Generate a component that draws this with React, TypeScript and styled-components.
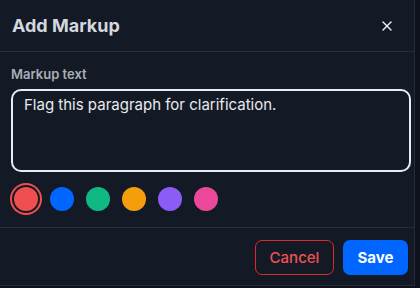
import React, { useState } from 'react'
import styled, { createGlobalStyle } from 'styled-components'

// G L O B A L
const GlobalStyle = createGlobalStyle`
  html, body {
    margin: 0;
    padding: 0;
    background: #0e131b;
  }
  body {
    font-family: Inter, "Liberation Sans", Arial, sans-serif;
    -webkit-font-smoothing: antialiased;
  }
  * { box-sizing: border-box; }
`

const SWATCHES = ['#f04f4f', '#0066ff', '#10b981', '#f59e0b', '#8b5cf6', '#ec4899']

// C O M P O N E N T
export default function App() {
  const [color, setColor] = useState(SWATCHES[0])
  const [text, setText] = useState('Flag this paragraph for clarification.')

  return (
    <>
      <GlobalStyle />
      <Dialog>
        <Header>
          <Title>Add Markup</Title>
          <CloseButton aria-label='Close'>
            <svg width='16' height='16' viewBox='0 0 24 24' fill='none' stroke='currentColor' strokeWidth='2.2' strokeLinecap='round'>
              <path d='M18 6 6 18' />
              <path d='m6 6 12 12' />
            </svg>
          </CloseButton>
        </Header>
        <Body>
          <Label htmlFor='markup'>Markup text</Label>
          <TextArea id='markup' value={text} onChange={(e) => setText(e.target.value)} />
          <Swatches>
            {SWATCHES.map((c) => (
              <Swatch
                key={c}
                $color={c}
                $active={c === color}
                onClick={() => setColor(c)}
                aria-label={c}
              />
            ))}
          </Swatches>
        </Body>
        <Footer>
          <CancelButton>Cancel</CancelButton>
          <SaveButton>Save</SaveButton>
        </Footer>
      </Dialog>
    </>
  )
}

// S T Y L E S
const Dialog = styled.div`
  width: 415px;
  height: 286px;
  background: #141a25;
  border-right: 1px solid #232c38;
  border-bottom: 1px solid #232c38;
  display: flex;
  flex-direction: column;
`

const Header = styled.div`
  height: 52px;
  padding: 0 12px 0 12px;
  display: flex;
  align-items: center;
  justify-content: space-between;
  border-bottom: 1px solid #262f3c;
`

const Title = styled.h2`
  margin: 0;
  font-size: 18px;
  font-weight: 700;
  color: #d3d7de;
`

const CloseButton = styled.button`
  width: 24px;
  height: 24px;
  margin-right: 3px;
  padding: 0;
  border: none;
  background: none;
  color: #eceff3;
  display: flex;
  align-items: center;
  justify-content: center;
  cursor: pointer;
`

const Body = styled.div`
  padding: 14px 11px 0 11px;
  display: flex;
  flex-direction: column;
  border-bottom: 1px solid #262f3c;
`

const Label = styled.label`
  font-size: 13px;
  font-weight: 600;
  color: #a9aeb7;
  line-height: 16px;
  margin-bottom: 7px;
`

const TextArea = styled.textarea`
  width: 400px;
  height: 83px;
  resize: none;
  background: #141a25;
  border: 2px solid #e9ebef;
  border-radius: 10px;
  padding: 4px 11px;
  font-family: Inter, "Liberation Sans", Arial, sans-serif;
  font-size: 15px;
  line-height: 20px;
  color: #e8eaee;
  outline: none;
`

const Swatches = styled.div`
  display: flex;
  gap: 12px;
  padding: 15px 0 16px 3px;
`

const Swatch = styled.button<{ $color: string; $active: boolean }>`
  width: 24px;
  height: 24px;
  padding: 0;
  border: none;
  border-radius: 50%;
  background: ${(p) => p.$color};
  box-shadow: ${(p) => (p.$active ? `0 0 0 2px #141a25, 0 0 0 4px ${p.$color}` : 'none')};
  cursor: pointer;
`

const Footer = styled.div`
  flex: 1;
  display: flex;
  justify-content: flex-end;
  align-items: flex-start;
  gap: 9px;
  padding: 12px 6px 0 0;
`

const BaseButton = styled.button`
  height: 35px;
  border-radius: 7px;
  font-family: Inter, "Liberation Sans", Arial, sans-serif;
  font-size: 15px;
  cursor: pointer;
`

const CancelButton = styled(BaseButton)`
  width: 79px;
  background: transparent;
  border: 1px solid #dc2a2a;
  color: #ee5252;
  font-weight: 500;
`

const SaveButton = styled(BaseButton)`
  width: 65px;
  background: #0066ff;
  border: none;
  color: #ffffff;
  font-weight: 700;
`
